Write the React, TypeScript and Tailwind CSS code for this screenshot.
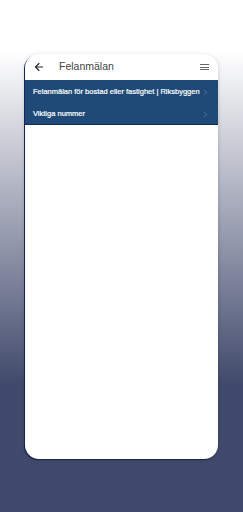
import { ArrowLeft, ChevronRight } from "lucide-react";

const rows = ["Felanmälan för bostad eller fastighet | Riksbyggen", "Viktiga nummer"];

export default function App() {
  return (
    <div className="h-[512px] w-[243px] overflow-hidden bg-[linear-gradient(to_bottom,#ffffff_10%,#414a6c_75%,#414a6c_100%)] pt-[54px] font-['Liberation_Sans',Arial,sans-serif]">
      <div className="mx-auto flex h-[405px] w-[193px] flex-col overflow-hidden rounded-[14px] bg-white shadow-[0_1px_4px_rgba(0,0,0,0.18),-1px_1px_0_#1b2460]">
        {/* Header */}
        <div className="flex h-[26px] items-center px-[8px]">
          <ArrowLeft size={12} strokeWidth={2.2} className="text-[#222]" />
          <span className="ml-[14px] text-[10.5px] text-[#444]">Felanmälan</span>
          <div className="ml-auto flex flex-col gap-[1.5px] pr-[1px]">
            <span className="block h-[1px] w-[9px] bg-[#666]" />
            <span className="block h-[1px] w-[9px] bg-[#666]" />
            <span className="block h-[1px] w-[9px] bg-[#666]" />
          </div>
        </div>

        {/* Links */}
        <div className="border-b border-[#0f2d52] bg-[#1f4a78]">
          {rows.map((r) => (
            <div key={r} className="flex h-[22px] items-center pl-[8px] pr-[8px] pt-[2px]">
              <span className="flex-1 whitespace-nowrap text-[7.5px] text-white [-webkit-text-stroke:0.2px_white]">{r}</span>
              <ChevronRight size={9} strokeWidth={1.5} className="text-[#7f93ad]" />
            </div>
          ))}
        </div>
        <div className="flex-1" />
      </div>
    </div>
  );
}
